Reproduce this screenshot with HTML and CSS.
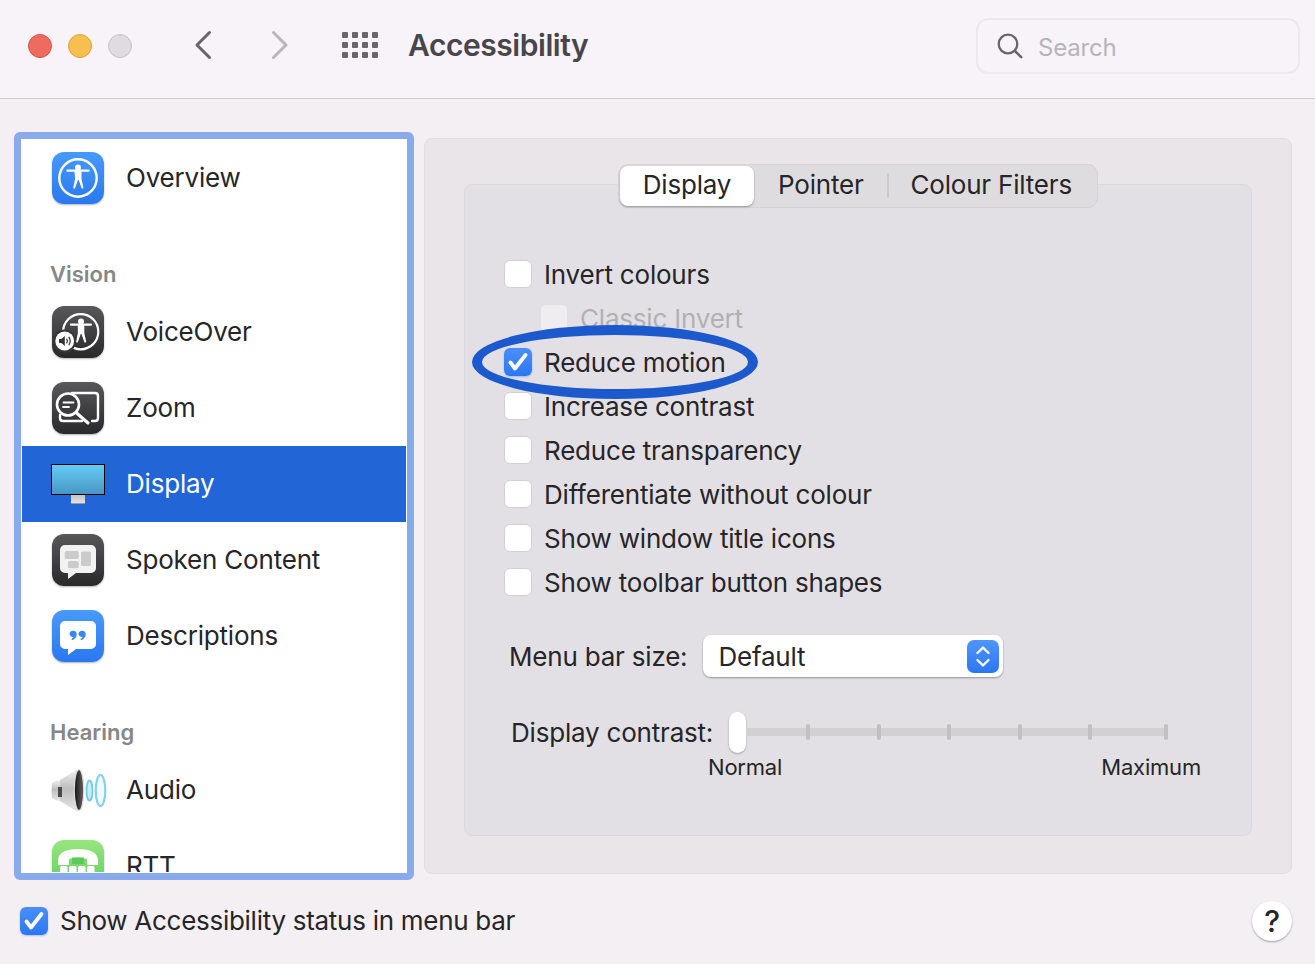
FILE: index.html
```html
<!DOCTYPE html>
<html lang="en">
<head>
<meta charset="utf-8">
<title>Accessibility</title>
<link rel="stylesheet" href="styles.css">
</head>
<body>
<div class="window">
  <header class="toolbar">
    <div class="lights">
      <span class="light red"></span>
      <span class="light yellow"></span>
      <span class="light grey"></span>
    </div>
    <div class="nav">
      <svg class="chev" viewBox="0 0 18 30"><path d="M15.500 2.500 3 15l12.500 12.500" fill="none" stroke="#69666b" stroke-width="3" stroke-linecap="round" stroke-linejoin="round"/></svg>
      <svg class="chev" viewBox="0 0 18 30"><path d="M2.500 2.500 15 15 2.500 27.500" fill="none" stroke="#b9b6bb" stroke-width="3" stroke-linecap="round" stroke-linejoin="round"/></svg>
    </div>
    <div class="grid-btn">
      <i></i><i></i><i></i><i></i><i></i><i></i><i></i><i></i><i></i><i></i><i></i><i></i>
    </div>
    <h1 class="title">Accessibility</h1>
    <div class="search">
      <svg class="mag" viewBox="0 0 26 26"><circle cx="11" cy="11" r="9.300" fill="none" stroke="#69666b" stroke-width="2.300"/><path d="M18 18l6.200 6.200" stroke="#69666b" stroke-width="2.600" stroke-linecap="round"/></svg>
      <span class="search-text">Search</span>
    </div>
  </header>

  <main class="content">
    <nav class="sidebar">
      <div class="list">
        <div class="row">
          <div class="icon blue">
            <svg viewBox="0 0 52 52"><circle cx="26" cy="26" r="18.700" fill="none" stroke="#fff" stroke-width="2.400"/><circle cx="26" cy="15.500" r="3" fill="#fff"/><path d="M15.500 18.600h21" stroke="#fff" stroke-width="2.400" stroke-linecap="round"/><path d="M22.500 19h7v8l2 9.200-1.800.4-3-8.600h-.8l-3 8.600-1.800-.4 2-9.200z" fill="#fff"/></svg>
          </div>
          <span>Overview</span>
        </div>
        <div class="section">Vision</div>
        <div class="row">
          <div class="icon dark">
            <svg viewBox="0 0 52 52"><circle cx="28.700" cy="25.700" r="17.600" fill="none" stroke="#fff" stroke-width="2.200"/><circle cx="29" cy="15.500" r="3" fill="#fff"/><path d="M19 18.600h20" stroke="#fff" stroke-width="2.300" stroke-linecap="round"/><path d="M25.700 19h6.600v8l2 9.200-1.800.4-3-8.600h-.8l-3 8.600-1.800-.4 2-9.200z" fill="#fff"/><circle cx="12.700" cy="35" r="11.500" fill="#38383a"/><circle cx="12.700" cy="35" r="9.400" fill="#fff"/><path d="M7 33h2.400l3.400-3v10l-3.400-3H7z" fill="#333"/><path d="M14.600 32.600q1.600 2.400 0 4.800M16.800 30.800q2.800 4.200 0 8.400" fill="none" stroke="#333" stroke-width="1.200"/></svg>
          </div>
          <span>VoiceOver</span>
        </div>
        <div class="row">
          <div class="icon dark">
            <svg viewBox="0 0 52 52"><path d="M20 11h23q3 0 3 3v22q0 3-3 3h-3M30 39H11q-3 0-3-3v-3" fill="none" stroke="#fff" stroke-width="2.400" stroke-linecap="round"/><circle cx="16" cy="22.500" r="11" fill="#3d3d3f" stroke="#fff" stroke-width="2.600"/><path d="M24 30.500 36 41" stroke="#fff" stroke-width="3" stroke-linecap="round"/><path d="M11.500 20.500h10M11 25h6" stroke="#fff" stroke-width="1.800" stroke-linecap="round"/></svg>
          </div>
          <span>Zoom</span>
        </div>
        <div class="row selected">
          <div class="monitor">
            <div class="screen"></div>
            <div class="stand"></div>
          </div>
          <span>Display</span>
        </div>
        <div class="row">
          <div class="icon dark">
            <svg viewBox="0 0 52 52"><path d="M13 11h26a5 5 0 0 1 5 5v18a5 5 0 0 1-5 5H24l-8 6v-6h-3a5 5 0 0 1-5-5V16a5 5 0 0 1 5-5z" fill="#f2f2f2"/><rect x="12.700" y="17" width="14" height="8" rx="1.500" fill="#cbcbcb"/><rect x="16" y="27" width="10.700" height="7.300" rx="1.500" fill="#cbcbcb"/><rect x="29" y="17.500" width="10" height="14.500" rx="1.500" fill="#cbcbcb"/></svg>
          </div>
          <span>Spoken Content</span>
        </div>
        <div class="row">
          <div class="icon blue">
            <svg viewBox="0 0 52 52"><path d="M13 11h26a5 5 0 0 1 5 5v18a5 5 0 0 1-5 5H24l-8 6v-6h-3a5 5 0 0 1-5-5V16a5 5 0 0 1 5-5z" fill="#fff"/><path d="M17.500 24.300a3.600 3.600 0 1 1 7.200 0c0 2.900-1.800 4.900-4.600 6l-.7-1.200c1.200-.6 2-1.300 2.400-2.300a3.600 3.600 0 0 1-4.300-2.500zM26.500 24.300a3.600 3.600 0 1 1 7.200 0c0 2.900-1.800 4.900-4.600 6l-.7-1.200c1.200-.6 2-1.300 2.400-2.300a3.600 3.600 0 0 1-4.300-2.500z" fill="#3a86f5"/></svg>
          </div>
          <span>Descriptions</span>
        </div>
        <div class="section">Hearing</div>
        <div class="row">
          <svg class="speaker" viewBox="0 0 56 52">
            <defs>
              <linearGradient id="cone" x1="0" y1="0" x2="0" y2="1"><stop offset="0" stop-color="#f1f1f1"/><stop offset=".45" stop-color="#bdbdbd"/><stop offset="1" stop-color="#e6e6e6"/></linearGradient>
              <linearGradient id="mouth" x1="0" y1="0" x2="1" y2="0"><stop offset="0" stop-color="#111"/><stop offset="1" stop-color="#666"/></linearGradient>
            </defs>
            <path d="M1 19q3-2 9-3l0 21q-6-.5-9-3-1-7.500 0-15z" fill="url(#cone)"/>
            <path d="M9 16 25 6q2-1 3 0l2 20-2 20q-1 2-3 1L9 37z" fill="url(#cone)"/>
            <path d="M7 23h4v10H7z" fill="#4a4a4a"/>
            <ellipse cx="28" cy="26" rx="4.800" ry="20.500" fill="url(#mouth)" stroke="#dcdcdc" stroke-width="1.300"/>
            <ellipse cx="38.500" cy="26.500" rx="3" ry="10" fill="#c9ecf5" stroke="#70cde5" stroke-width="1.800"/>
            <ellipse cx="49.500" cy="26.500" rx="4.800" ry="15.500" fill="#eefafd" stroke="#80d3e8" stroke-width="2.200"/>
          </svg>
          <span>Audio</span>
        </div>
        <div class="row">
          <div class="icon green">
            <svg viewBox="0 0 52 52"><path d="M6 21q0-12 20-12t20 12v4H35v-6q-9-3-18 0v6H6z" fill="#fff"/><path d="M20 17.500h12v6.500H20z" fill="#5dc95a"/><rect x="8" y="26" width="7.500" height="8" rx="1.500" fill="#fff"/><rect x="17" y="26" width="7.500" height="8" rx="1.500" fill="#fff"/><rect x="26" y="26" width="7.500" height="8" rx="1.500" fill="#fff"/><rect x="35" y="26" width="7.500" height="8" rx="1.500" fill="#fff"/></svg>
          </div>
          <span>RTT</span>
        </div>
      </div>
    </nav>

    <section class="panel">
      <div class="tabs">
        <span class="tab active">Display</span>
        <span class="tab pointer">Pointer</span>
        <span class="tab-sep"></span>
        <span class="tab filters">Colour Filters</span>
      </div>
      <div class="box">
        <div class="check-row"><span class="box-check"></span><span>Invert colours</span></div>
        <div class="check-row sub"><span class="box-check"></span><span>Classic Invert</span></div>
        <div class="check-row highlighted">
          <span class="box-check on"><svg viewBox="0 0 28 28"><path d="M6.500 14.500 11 20.500 21.500 7" fill="none" stroke="#fff" stroke-width="3.800" stroke-linecap="round" stroke-linejoin="round"/></svg></span>
          <span>Reduce motion</span>
          <span class="ring"></span>
        </div>
        <div class="check-row"><span class="box-check"></span><span>Increase contrast</span></div>
        <div class="check-row"><span class="box-check"></span><span>Reduce transparency</span></div>
        <div class="check-row"><span class="box-check"></span><span>Differentiate without colour</span></div>
        <div class="check-row"><span class="box-check"></span><span>Show window title icons</span></div>
        <div class="check-row"><span class="box-check"></span><span>Show toolbar button shapes</span></div>

        <div class="menu-row">
          <span>Menu bar size:</span>
          <div class="select">
            <span>Default</span>
            <span class="stepper"><svg viewBox="0 0 32 33"><path d="M10.500 13 16 7.500 21.500 13M10.500 20 16 25.500 21.500 20" fill="none" stroke="#fff" stroke-width="2.400" stroke-linecap="round" stroke-linejoin="round"/></svg></span>
          </div>
        </div>

        <div class="contrast-row">
          <span class="contrast-label">Display contrast:</span>
          <div class="slider">
            <span class="thumb"></span>
            <div class="track">
              <i class="tick"></i><i class="tick"></i><i class="tick"></i><i class="tick"></i><i class="tick"></i><i class="tick last"></i>
            </div>
          </div>
        </div>
        <div class="scale">
          <span>Normal</span>
          <span>Maximum</span>
        </div>
      </div>
    </section>
  </main>

  <footer class="footer">
    <span class="box-check on"><svg viewBox="0 0 28 28"><path d="M6.500 14.500 11 20.500 21.500 7" fill="none" stroke="#fff" stroke-width="3.800" stroke-linecap="round" stroke-linejoin="round"/></svg></span>
    <span class="footer-label">Show Accessibility status in menu bar</span>
    <span class="help">?</span>
  </footer>
</div>
</body>
</html>
```
FILE: styles.css
```css
* { box-sizing: border-box; }
html, body { margin: 0; padding: 0; }
body {
  width: 1315px;
  height: 964px;
  overflow: hidden;
  background: #f4eff3;
  font-family: Inter, "Liberation Sans", sans-serif;
  font-size: 26px;
  letter-spacing: -.2px;
  color: #262527;
}
.window { display: flex; flex-direction: column; height: 964px; }

.toolbar {
  display: flex;
  align-items: center;
  height: 99px;
  padding: 0 15px 7px 28px;
  background: #f7f3f9;
  border-bottom: 1px solid #cfcbcf;
}
.lights { display: flex; gap: 16px; margin-right: 62px; }
.light { width: 24px; height: 24px; border-radius: 50%; border: 1px solid; }
.red { background: #ee6b60; border-color: #d9534a; }
.yellow { background: #f6bf4f; border-color: #dfa33a; }
.grey { background: #dfdbe0; border-color: #c6c2c7; }
.nav { display: flex; gap: 59px; margin: 0 53px 2px 0; }
.chev { width: 18px; height: 30px; display: block; }
.grid-btn {
  display: grid;
  grid-template-columns: repeat(4, 6px);
  grid-template-rows: repeat(3, 6px);
  gap: 4px;
  margin: 0 30px 2px 0;
}
.grid-btn i { background: #69666b; border-radius: 1px; }
.title { margin: 0 0 2px; font-size: 30px; font-weight: 600; color: #48464a; letter-spacing: -.45px; }
.search {
  display: flex;
  align-items: center;
  margin-left: auto;
  margin-top: 1px;
  width: 324px;
  height: 56px;
  padding-left: 19px;
  border: 2px solid #ece8ee;
  border-radius: 12px;
}
.mag { width: 26px; height: 26px; margin-right: 15px; }
.search-text { color: #b7b4b9; font-size: 24px; margin-top: 2px; }

.content { display: flex; align-items: flex-start; gap: 10px; padding: 33px 23px 0 14px; }
.sidebar {
  width: 400px;
  height: 748px;
  border: 7px solid #8aaaee;
  border-radius: 6px;
  background: #fff;
  padding: 1px;
  flex: none;
}
.list { height: 100%; overflow: hidden; }
.row {
  display: flex;
  align-items: center;
  gap: 22px;
  height: 76px;
  padding-left: 30px;
  flex: none;
}
.row > span { margin-bottom: 2px; }
.selected { background: #2265d6; color: #fff; }
.section {
  display: flex;
  align-items: flex-end;
  height: 78px;
  padding: 0 0 7px 28px;
  color: #878688;
  font-size: 22px;
  font-weight: 600;
  letter-spacing: 0;
}
.icon {
  width: 52px;
  height: 52px;
  border-radius: 12px;
  flex: none;
  box-shadow: 0 1px 2px rgba(0,0,0,.3);
}
.icon svg { display: block; width: 52px; height: 52px; }
.blue { background: linear-gradient(#479afa, #2a78f0); }
.dark { background: linear-gradient(#58585b, #29292b); }
.green { background: linear-gradient(#98e680, #5dc95a); }
.monitor { width: 54px; margin: 0 -1px; flex: none; }
.screen {
  height: 31px;
  border: 1.500px solid #000;
  background: linear-gradient(#63ccf5, #4997c3);
}
.stand {
  width: 14px;
  height: 9px;
  margin: 0 auto;
  background: linear-gradient(#c4c4c4, #e2e2e2);
  border-bottom: 1px solid #9a9a9a;
}
.speaker { width: 56px; height: 52px; margin: 0 -3px 0 -1px; flex: none; }

.panel {
  width: 868px;
  height: 736px;
  margin-top: 6px;
  padding: 25px 39px 0;
  background: #e9e5e9;
  border: 1px solid #e1dde1;
  border-radius: 8px;
  display: flex;
  flex-direction: column;
  align-items: center;
}
.tabs {
  display: flex;
  align-items: center;
  position: relative;
  z-index: 1;
  width: 480px;
  height: 44px;
  margin-bottom: -24px;
  padding: 1px;
  background: #dfdcdf;
  border: 1px solid #d6d3d6;
  border-radius: 10px;
}
.tab { padding-bottom: 3px; }
.tab.active {
  display: flex;
  align-items: center;
  justify-content: center;
  width: 134px;
  height: 40px;
  background: #fff;
  border-radius: 8px;
  box-shadow: 0 1px 2px rgba(0,0,0,.35);
}
.tab.pointer { margin-left: 24px; }
.tab-sep { width: 2px; height: 24px; background: #cdcacd; margin: 0 22px 0 23px; }
.box {
  width: 788px;
  height: 652px;
  padding: 67px 39px 0;
  background: #e2e0e4;
  border: 1px solid #dcd9dc;
  border-radius: 8px;
}
.check-row {
  display: flex;
  align-items: center;
  gap: 12px;
  height: 44px;
  position: relative;
}
.box-check {
  display: block;
  width: 28px;
  height: 28px;
  background: #fff;
  border: 1px solid #d3d1d4;
  border-radius: 6px;
  flex: none;
}
.box-check svg { display: block; width: 28px; height: 28px; }
.box-check.on {
  background: linear-gradient(#4a8ff8, #2c78f2);
  border: 0;
  box-shadow: 0 1px 2px rgba(40,110,240,.35);
}
.sub { padding-left: 36px; color: #b2b0b3; }
.sub .box-check { background: #efedf0; border-color: #e2e0e3; }
.ring {
  position: absolute;
  left: -32px;
  top: -15px;
  width: 286px;
  height: 74px;
  border: 10px solid #1c59cc;
  border-radius: 50%;
}
.menu-row { display: flex; align-items: center; gap: 16px; height: 42px; margin: 31px 0 0 5px; }
.select {
  display: flex;
  align-items: center;
  justify-content: space-between;
  width: 300px;
  height: 42px;
  padding: 0 4px 0 15px;
  background: #fff;
  border-radius: 8px;
  box-shadow: 0 1px 2px rgba(0,0,0,.35);
}
.stepper {
  width: 32px;
  height: 33px;
  border-radius: 7px;
  background: linear-gradient(#4f95f9, #2b77f2);
}
.stepper svg { display: block; width: 32px; height: 33px; }
.contrast-row { display: flex; align-items: center; gap: 16px; height: 42px; margin: 34px 0 0 7px; }
.slider { display: flex; align-items: center; }
.thumb {
  width: 17px;
  height: 41px;
  background: #fff;
  border-radius: 9px;
  box-shadow: 0 1px 2px rgba(0,0,0,.3);
  flex: none;
}
.track {
  display: flex;
  align-items: center;
  gap: 66.500px;
  width: 422px;
  height: 8px;
  padding-left: 60px;
  background: #d2d0d3;
}
.tick { width: 4px; height: 16px; background: #c1bfc2; border-radius: 2px; flex: none; }
.tick.last { margin-left: 5.500px; }
.scale {
  display: flex;
  justify-content: space-between;
  align-items: center;
  height: 28px;
  padding: 0 11px 0 204px;
  font-size: 22px;
}

.footer {
  display: flex;
  align-items: center;
  height: 82px;
  padding: 0 23px 0 20px;
}
.footer-label { margin: 0 0 2px 12px; letter-spacing: -.28px; }
.help {
  display: flex;
  align-items: center;
  justify-content: center;
  width: 40px;
  height: 40px;
  margin-left: auto;
  background: #fff;
  border-radius: 50%;
  box-shadow: 0 1px 2px rgba(0,0,0,.35);
  font-size: 30px;
  font-weight: 500;
}
```
